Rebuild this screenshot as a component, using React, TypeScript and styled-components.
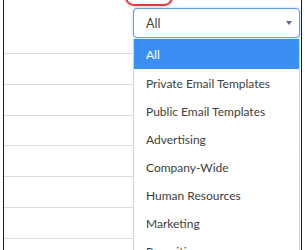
import styled, { createGlobalStyle } from "styled-components";

const GlobalStyle = createGlobalStyle`
  html, body {
    margin: 0;
    padding: 0;
    background: #fff;
  }
  body {
    font-family: Lato, "Liberation Sans", Arial, sans-serif;
  }
`;

const Frame = styled.div`
  position: relative;
  margin-left: 3px;
  width: 297px;
  height: 250px;
  border-left: 1px solid #1c1c1c;
  border-right: 1px solid #1c1c1c;
  overflow: hidden;
`;

const Callout = styled.div`
  position: absolute;
  left: 121px;
  top: -22px;
  width: 44px;
  height: 24px;
  border: 2px solid #e6393e;
  border-radius: 9px;
  box-shadow: 0 0 3px rgba(230, 57, 62, 0.45);
`;

const Toolbar = styled.div`
  height: 53px;
  display: flex;
  justify-content: flex-end;
  align-items: flex-start;
  padding-top: 8px;
  box-sizing: border-box;
`;

const Picker = styled.div`
  position: relative;
  width: 167px;
  margin-right: 1px;
`;

const SelectBox = styled.div`
  height: 30px;
  box-sizing: border-box;
  border: 1px solid #5c9ee8;
  border-radius: 4px;
  box-shadow: 0 0 2px rgba(21, 137, 238, 0.5);
  display: flex;
  align-items: center;
  justify-content: space-between;
  padding: 0 7px 0 12px;
  font-size: 12.5px;
  color: #444;
  background: #fff;
`;

const Caret = styled.span`
  width: 0;
  height: 0;
  border-left: 3.5px solid transparent;
  border-right: 3.5px solid transparent;
  border-top: 4px solid #54698d;
`;

const Menu = styled.ul`
  position: absolute;
  top: 31px;
  left: 0;
  right: 0;
  margin: 0;
  padding: 0;
  list-style: none;
  background: #fff;
  border-left: 1px solid #c9d6e8;
  border-right: 1px solid #c9d6e8;
  z-index: 2;
`;

const MenuItem = styled.li<{ $active?: boolean }>`
  height: 28px;
  display: flex;
  align-items: center;
  padding-left: 12px;
  font-size: 12px;
  color: ${(p) => (p.$active ? "#fff" : "#3e3e3c")};
  background: ${(p) => (p.$active ? "#3b8ff3" : "transparent")};
  white-space: nowrap;

  &:first-child {
    height: 30px;
  }
`;

const Row = styled.div`
  height: 30.8px;
  border-top: 1px solid #dcdcdc;
  box-sizing: border-box;
`;

const folders = [
  "All",
  "Private Email Templates",
  "Public Email Templates",
  "Advertising",
  "Company-Wide",
  "Human Resources",
  "Marketing",
  "Recruiting",
];

export default function App() {
  return (
    <>
      <GlobalStyle />
      <Frame>
        <Callout />
        <Toolbar>
          <Picker>
            <SelectBox>
              <span>All</span>
              <Caret />
            </SelectBox>
            <Menu>
              {folders.map((f, i) => (
                <MenuItem key={f} $active={i === 0}>
                  {f}
                </MenuItem>
              ))}
            </Menu>
          </Picker>
        </Toolbar>
        {[0, 1, 2, 3, 4, 5, 6].map((r) => (
          <Row key={r} />
        ))}
      </Frame>
    </>
  );
}
